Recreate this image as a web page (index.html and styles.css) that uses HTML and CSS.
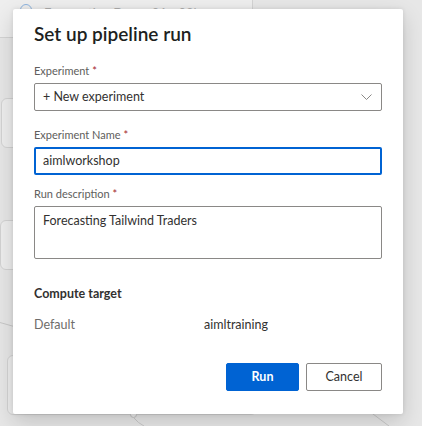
FILE: index.html
```html
<!DOCTYPE html>
<html lang="en">
<head>
<meta charset="utf-8">
<title>Set up pipeline run</title>
<link rel="stylesheet" href="styles.css">
</head>
<body>
  <div class="canvas" aria-hidden="true">
    <div class="node node-top">
      <span class="node-dot"></span>
      <span class="node-text">Forecasting Data - 01 - 02l</span>
    </div>
    <div class="node node-a"></div>
    <div class="node node-b"></div>
    <div class="node node-c"></div>
    <span class="port"></span>
    <svg class="edges" width="422" height="426" viewBox="0 0 422 426">
      <path d="M0 322.5 L14 326.5" />
      <path d="M134 418 Q138 423 144 426" />
      <path d="M369 411 L389 426" />
    </svg>
  </div>

  <div class="dialog" role="dialog" aria-labelledby="dlg-title">
    <h1 class="dialog-title" id="dlg-title">Set up pipeline run</h1>

    <div class="field field-experiment">
      <label class="field-label">Experiment <span class="req">*</span></label>
      <div class="dropdown">
        <span class="dropdown-text">+ New experiment</span>
        <svg class="chevron" width="11" height="6" viewBox="0 0 11 6"><path d="M0.5 0.5 L5.5 5.5 L10.5 0.5" /></svg>
      </div>
    </div>

    <div class="field field-name">
      <label class="field-label">Experiment Name <span class="req">*</span></label>
      <div class="textbox focused">aimlworkshop</div>
    </div>

    <div class="field field-desc">
      <label class="field-label">Run description <span class="req">*</span></label>
      <div class="textarea">Forecasting Tailwind Traders</div>
    </div>

    <h2 class="section-title">Compute target</h2>
    <div class="kv">
      <span class="kv-key">Default</span>
      <span class="kv-value">aimltraining</span>
    </div>

    <div class="actions">
      <button class="btn btn-primary">Run</button>
      <button class="btn btn-default">Cancel</button>
    </div>
  </div>
</body>
</html>
```

FILE: styles.css
```css
* { box-sizing: border-box; }

html, body {
  margin: 0;
}

body {
  width: 422px;
  height: 426px;
  overflow: hidden;
  position: relative;
  padding: 9px 0 0 13px;
  background: #e7e7e7;
  font-family: Lato, "Open Sans", Arial, sans-serif;
  color: #323130;
}

/* ---------- dimmed designer canvas behind the dialog ---------- */
.canvas {
  position: absolute;
  inset: 0;
  z-index: 0;
}

.node {
  position: absolute;
  background: #eeeeee;
  border: 1px solid #d3d3d3;
  border-radius: 6px;
}

.node-top {
  left: -8px;
  top: -30px;
  width: 261px;
  height: 68px;
  display: flex;
  align-items: flex-end;
  padding: 0 0 21px 27px;
  gap: 12px;
}

.node-dot {
  width: 12px;
  height: 12px;
  border: 1.5px solid #8db3de;
  border-radius: 50%;
}

.node-text {
  font-size: 13px;
  line-height: 16px;
  color: #b0b0b0;
  white-space: nowrap;
  margin-bottom: -5px;
}

.node-a {
  left: 1px;
  top: 98px;
  width: 120px;
  height: 50px;
}

.node-b {
  left: 0;
  top: 220px;
  width: 120px;
  height: 50px;
}

.node-c {
  left: 7px;
  top: 355px;
  width: 250px;
  height: 60px;
}

.port {
  position: absolute;
  left: 130px;
  top: 411px;
  width: 7px;
  height: 7px;
  border: 1px solid #c4c4c4;
  border-radius: 50%;
  background: #eeeeee;
}

.edges {
  position: absolute;
  left: 0;
  top: 0;
}

.edges path {
  fill: none;
  stroke: #c8c8c8;
  stroke-width: 1;
}

/* ---------- dialog ---------- */
.dialog {
  position: relative;
  z-index: 1;
  width: 390px;
  height: 405px;
  background: #ffffff;
  border-radius: 2px;
  padding: 13px 21px 0 21px;
  box-shadow: 0 0 4px rgba(0, 0, 0, 0.10), 0 8px 22px rgba(0, 0, 0, 0.16);
  display: flex;
  flex-direction: column;
}

.dialog-title {
  margin: 0;
  font-size: 19px;
  line-height: 24px;
  font-weight: 600;
  color: #201f1e;
}

.field {
  display: flex;
  flex-direction: column;
}

.field-experiment { margin-top: 18px; }
.field-name { margin-top: 17px; }
.field-desc { margin-top: 12px; }

.field-label {
  font-size: 11px;
  line-height: 14px;
  color: #605e5c;
  margin-bottom: 5px;
}

.req {
  color: #a4262c;
}

.dropdown {
  height: 28px;
  border: 1px solid #8a8886;
  border-radius: 2px;
  display: flex;
  align-items: center;
  justify-content: space-between;
  padding: 0 9px 0 8px;
}

.dropdown-text {
  font-size: 12.5px;
  line-height: 26px;
}

.chevron path {
  fill: none;
  stroke: #8a8886;
  stroke-width: 1;
}

.textbox {
  height: 28px;
  border: 1px solid #8a8886;
  border-radius: 2px;
  padding: 0 8px;
  font-size: 12.5px;
  line-height: 26px;
}

.textbox.focused {
  border: 2px solid #0063d3;
  padding: 0 7px;
  line-height: 24px;
}

.textarea {
  height: 53px;
  border: 1px solid #8a8886;
  border-radius: 2px;
  padding: 5px 8px;
  font-size: 12.5px;
  line-height: 18px;
}

.section-title {
  margin: 26px 0 0 0;
  font-size: 12.5px;
  line-height: 18px;
  font-weight: 700;
  color: #323130;
}

.kv {
  display: grid;
  grid-template-columns: 170px 1fr;
  margin-top: 13px;
  font-size: 12.5px;
  line-height: 18px;
}

.kv-key { color: #6e6c6a; }
.kv-value { color: #323130; }

.actions {
  display: flex;
  justify-content: flex-end;
  gap: 7px;
  margin-top: 29px;
}

.btn {
  height: 28px;
  border-radius: 2px;
  font-family: inherit;
  font-size: 12.5px;
  line-height: 26px;
  padding: 0;
  cursor: pointer;
}

.btn-primary {
  width: 73px;
  background: #0063d3;
  border: 1px solid #0063d3;
  color: #ffffff;
  font-weight: 700;
}

.btn-default {
  width: 76px;
  background: #ffffff;
  border: 1px solid #8a8886;
  color: #323130;
}
```
